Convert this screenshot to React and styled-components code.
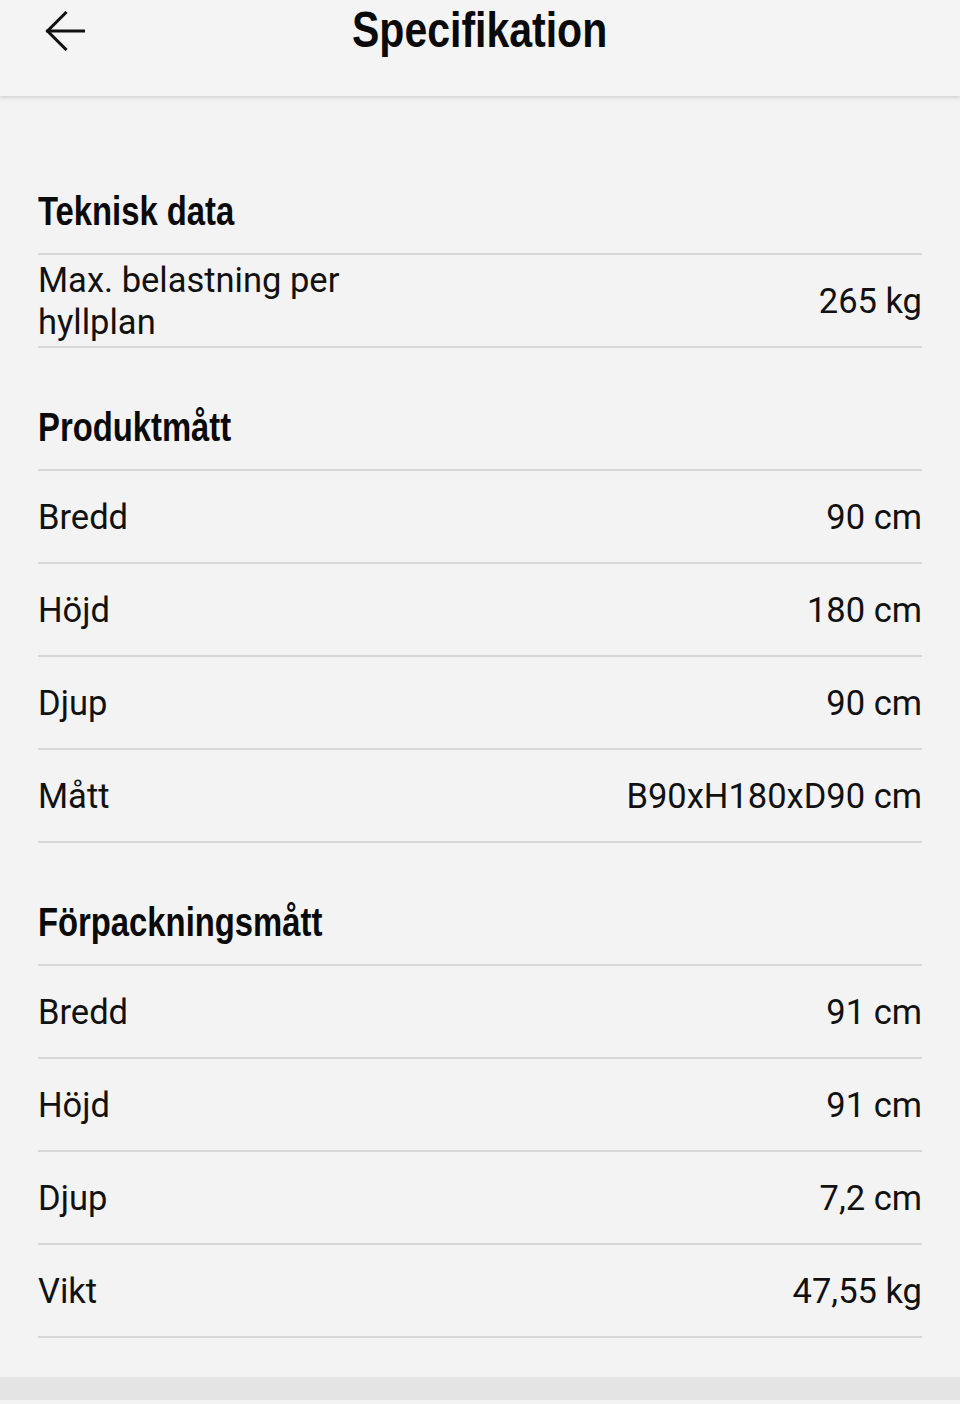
import React from 'react';
import styled, { createGlobalStyle } from 'styled-components';

const sections = [
  {
    title: 'Teknisk data',
    rows: [['Max. belastning per hyllplan', '265 kg']],
  },
  {
    title: 'Produktmått',
    rows: [
      ['Bredd', '90 cm'],
      ['Höjd', '180 cm'],
      ['Djup', '90 cm'],
      ['Mått', 'B90xH180xD90 cm'],
    ],
  },
  {
    title: 'Förpackningsmått',
    rows: [
      ['Bredd', '91 cm'],
      ['Höjd', '91 cm'],
      ['Djup', '7,2 cm'],
      ['Vikt', '47,55 kg'],
    ],
  },
];

const BackArrow = () => (
  <svg width="40" height="40" viewBox="0 0 40 40" fill="none">
    <path
      d="M2.5 20H38.5M20.5 2L2.5 20L20.5 38"
      stroke="#111"
      strokeWidth="3"
      strokeLinecap="square"
    />
  </svg>
);

const App = () => {
  return (
    <Page>
      <GlobalStyle />
      <Header>
        <BackButton aria-label="Tillbaka">
          <BackArrow />
        </BackButton>
        <Title>
          <Narrow $origin="center">Specifikation</Narrow>
        </Title>
        <span />
      </Header>
      <Main>
        {sections.map((section, i) => (
          <Section key={section.title}>
            <SectionTitle $first={i === 0}>
              <Narrow>{section.title}</Narrow>
            </SectionTitle>
            {section.rows.map(([label, value]) => (
              <Row key={label}>
                <Label>{label}</Label>
                <Value>{value}</Value>
              </Row>
            ))}
          </Section>
        ))}
      </Main>
      <BottomBar />
    </Page>
  );
};

export default App;

const GlobalStyle = createGlobalStyle`
  html, body {
    margin: 0;
    padding: 0;
    background: #f3f3f3;
  }
  * {
    box-sizing: border-box;
  }
`;

const Page = styled.div`
  min-height: 1404px;
  background: #f3f3f3;
  font-family: Roboto, 'Liberation Sans', sans-serif;
  color: #111;
`;

const Header = styled.header`
  position: relative;
  z-index: 1;
  display: grid;
  grid-template-columns: 1fr auto 1fr;
  align-items: start;
  height: 96px;
  background: #f4f4f4;
  box-shadow: 0 2px 4px rgba(0, 0, 0, 0.13);
`;

const BackButton = styled.button`
  justify-self: start;
  margin: 11px 0 0 45px;
  padding: 0;
  border: none;
  background: none;
  width: 40px;
  height: 40px;
  display: flex;
  cursor: pointer;
`;

/* condensed heading face: no narrow font installed, so squeeze a bold sans */
const Narrow = styled.span`
  display: inline-block;
  white-space: nowrap;
  transform: scaleX(0.82);
  transform-origin: ${(p) => p.$origin || 'left'} center;
`;

const Title = styled.h1`
  margin: 0;
  width: 250px;
  font-family: 'Liberation Sans', Arial, sans-serif;
  font-weight: 700;
  font-size: 50px;
  line-height: 60px;
  color: #0a0a0a;
  display: flex;
  justify-content: center;
`;

const Main = styled.main`
  padding: 34px 38px 39px;
`;

const Section = styled.section`
  display: flex;
  flex-direction: column;
`;

const SectionTitle = styled.h2`
  margin: 0;
  padding: ${(p) => (p.$first ? '56px' : '54px')} 0 17px;
  font-family: 'Liberation Sans', Arial, sans-serif;
  font-weight: 700;
  font-size: 40px;
  line-height: 50px;
  color: #0a0a0a;
  border-bottom: 2px solid #d7d7d7;
`;

const Row = styled.div`
  display: flex;
  align-items: center;
  justify-content: space-between;
  gap: 24px;
  min-height: 93px;
  padding-top: 1px;
  border-bottom: 2px solid #d7d7d7;
  font-size: 34.5px;
  line-height: 42px;
`;

const Label = styled.div`
  flex: 0 0 42%;
`;

const Value = styled.div`
  text-align: right;
  white-space: nowrap;
`;

const BottomBar = styled.div`
  height: 23px;
  background: #e4e4e4;
`;
